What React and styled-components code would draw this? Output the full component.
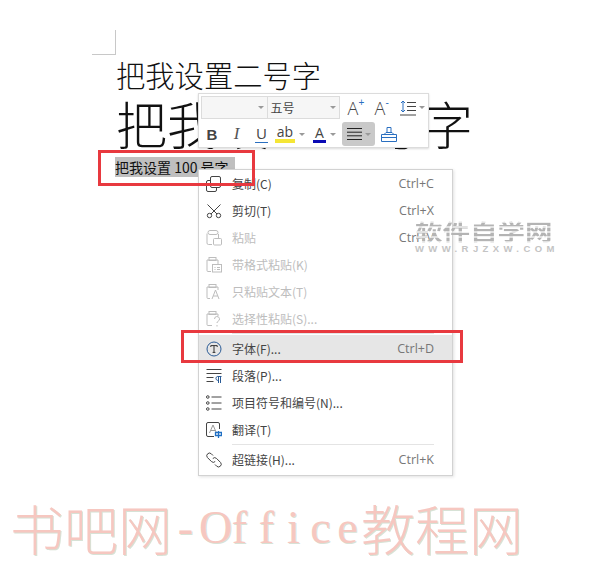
import React from 'react'
import styled, { createGlobalStyle } from 'styled-components'

const GlobalStyle = createGlobalStyle`
  html, body { margin: 0; padding: 0; background: #fff; }
  body { font-family: "Noto Sans CJK SC", "Liberation Sans", sans-serif; }
`

const menuItems = [
  { icon: 'copy', label: '复制(C)', key: 'Ctrl+C' },
  { icon: 'cut', label: '剪切(T)', key: 'Ctrl+X' },
  { icon: 'paste', label: '粘贴', key: 'Ctrl+V', off: true },
  { icon: 'pasteFormat', label: '带格式粘贴(K)', off: true },
  { icon: 'pasteText', label: '只粘贴文本(T)', off: true },
  { icon: 'pasteSpecial', label: '选择性粘贴(S)...', off: true, line: true },
  { icon: 'font', label: '字体(F)...', key: 'Ctrl+D', active: true },
  { icon: 'para', label: '段落(P)...' },
  { icon: 'list', label: '项目符号和编号(N)...' },
  { icon: 'translate', label: '翻译(T)', line: true },
  { icon: 'link', label: '超链接(H)...', key: 'Ctrl+K' },
]

const Ico = ({ children, w = 16, h = 16 }) => (
  <svg width={w} height={h} viewBox={`0 0 ${w} ${h}`} fill="none" stroke="currentColor" strokeWidth="1">
    {children}
  </svg>
)

const icons = {
  copy: (
    <Ico>
      <rect x="4.5" y="0.5" width="10" height="11" rx="1.5" />
      <path d="M4.5 4.5H2a1.5 1.5 0 0 0-1.5 1.5v8A1.5 1.5 0 0 0 2 15.5h7a1.5 1.5 0 0 0 1.500-1.500v-2.500" />
    </Ico>
  ),
  cut: (
    <Ico>
      <circle cx="3.5" cy="12.5" r="2.2" />
      <circle cx="12.5" cy="12.5" r="2.2" />
      <path d="M5 11L14.5 1.5M11 11L1.5 1.5" />
    </Ico>
  ),
  paste: (
    <Ico>
      <path d="M6 14.5H2.5a1.5 1.5 0 0 1-1.5-1.500V3.500" />
      <rect x="2" y="0.5" width="10" height="4" rx="2" />
      <path d="M12.500 4v4" />
      <rect x="7.500" y="8.500" width="8" height="6.500" rx="1" />
    </Ico>
  ),
  pasteFormat: (
    <Ico>
      <path d="M5 14.500H2a1 1 0 0 1-1-1V3h11v4" />
      <rect x="3" y="0.500" width="7" height="3" />
      <rect x="6.500" y="7.500" width="9" height="7.500" />
      <path d="M8.500 10.500h1M11 10.500h3M8.500 12.500h1M11 12.500h3" />
    </Ico>
  ),
  pasteText: (
    <Ico>
      <path d="M4 14.500H2a1 1 0 0 1-1-1V3h11v3" />
      <rect x="3" y="0.500" width="7" height="3" />
      <path d="M6 15l3.500-9L13 15M7.200 12h4.600" />
    </Ico>
  ),
  pasteSpecial: (
    <Ico>
      <path d="M6 14.500H2a1 1 0 0 1-1-1V3h11v2" />
      <rect x="3" y="0.500" width="7" height="3" />
      <path d="M8.500 8a2.500 2.500 0 1 1 3.500 2.300c-.7.4-1 .9-1 1.700M11 14v1.500" />
    </Ico>
  ),
  font: (
    <Ico>
      <circle cx="8" cy="8" r="7" stroke="#2a5b96" />
      <path d="M4.800 6V4.600h6.400V6M8 4.600v6.800M6.600 11.400h2.800" stroke="#333" />
    </Ico>
  ),
  para: (
    <Ico>
      <path d="M0.500 1.500h15M0.500 5.500h15M0.500 9.500h7M0.500 13.500h7" />
      <path d="M14.500 8.500v6.500M12.500 8.500v6.500M15.500 8.500h-4.200a2 2 0 0 0 0 3.800h1.200" stroke="#2a5b96" />
    </Ico>
  ),
  list: (
    <Ico>
      <circle cx="1.800" cy="2" r="1.300" />
      <circle cx="1.800" cy="8" r="1.300" />
      <circle cx="1.800" cy="14" r="1.300" />
      <path d="M5.500 2h10M5.500 8h10M5.500 14h10" />
    </Ico>
  ),
  translate: (
    <Ico>
      <path d="M8 14.500H2a1.500 1.500 0 0 1-1.500-1.500V2A1.500 1.500 0 0 1 2 .5h10A1.500 1.500 0 0 1 13.500 2v5" />
      <path d="M3.500 11l3.500-8 3.500 8M5 8.500h4" stroke="#999" />
      <path d="M9.500 10.500h6v3h-6zM12.500 9v7" stroke="#1f6fc4" strokeWidth="1.300" />
    </Ico>
  ),
  link: (
    <Ico>
      <path d="M7 3.500L5.200 1.700a2.700 2.700 0 0 0-3.800 3.800l4 4a2.700 2.700 0 0 0 3.800 0" />
      <path d="M9 12.500l1.800 1.800a2.700 2.700 0 0 0 3.800-3.800l-4-4a2.700 2.700 0 0 0-3.800 0" />
    </Ico>
  ),
}

function App() {
  return (
    <Page>
      <GlobalStyle />
      <CropMark />
      <Doc>
        <LineTwo>把我设置二号字</LineTwo>
        <LineOne>把我设置一号字</LineOne>
        <LineSmall><Picked>把我设置 100 号字</Picked></LineSmall>
      </Doc>

      <Toolbar>
        <ToolRow>
          <Combo $w={67}><Caret /></Combo>
          <Combo $w={74}>五号<Caret /></Combo>
          <ToolBtn $w={24} $ml={5}>
            <SizeMark>A<SizeSign>+</SizeSign></SizeMark>
          </ToolBtn>
          <ToolBtn $w={24} $ml={3}>
            <SizeMark>A<SizeSign>-</SizeSign></SizeMark>
          </ToolBtn>
          <ToolBtn $w={32} $ml={1}>
            <svg width="16" height="16" viewBox="0 0 16 16" fill="none" stroke="#444">
              <path d="M7 2.500h9M7 6.500h9M7 10.500h9M0 15h16" />
              <path d="M3 1v11M1 3l2-2 2 2M1 10l2 2 2-2" stroke="#2a6fc0" />
            </svg>
            <Caret $ml={3} />
          </ToolBtn>
        </ToolRow>
        <ToolRow $mt={2}>
          <ToolBtn $w={22} $ml={0}><BoldMark>B</BoldMark></ToolBtn>
          <ToolBtn $w={27} $ml={0}><ItalicMark>I</ItalicMark></ToolBtn>
          <ToolBtn $w={23} $ml={0}><UnderMark>U</UnderMark></ToolBtn>
          <ToolBtn $w={34} $ml={0}>
            <BarMark $bar="#f5e636" $h={4}>ab</BarMark>
            <Caret $ml={4} />
          </ToolBtn>
          <ToolBtn $w={35} $ml={0}>
            <BarMark $bar="#0a0ab4" $h={3}>A</BarMark>
            <Caret $ml={4} />
          </ToolBtn>
          <ToolBtn $w={33} $h={24} $on $ml={0}>
            <svg width="15" height="12" viewBox="0 0 15 12" fill="none" stroke="#222">
              <path d="M0 .500h15M0 4.200h15M0 7.800h15M0 11.500h15" />
            </svg>
            <Caret $ml={3} />
          </ToolBtn>
          <ToolBtn $w={21} $ml={3}>
            <svg width="16" height="16" viewBox="0 0 16 16" fill="none" stroke="#2a6fc0">
              <path d="M.500 8.500h15v7H.500zM.500 11.500h15M3 8.500l2-2h6l2 2M6 6.500V1.500h4v5" />
            </svg>
          </ToolBtn>
        </ToolRow>
      </Toolbar>

      <Menu>
        {menuItems.map((item) => (
          <React.Fragment key={item.label}>
            <MenuRow $active={item.active} $off={item.off}>
              <MenuIcon>{icons[item.icon]}</MenuIcon>
              <MenuLabel>{item.label}</MenuLabel>
              {item.key && <Shortcut>{item.key}</Shortcut>}
            </MenuRow>
            {item.line && <MenuLine />}
          </React.Fragment>
        ))}
      </Menu>

      <RedBoxFirst />
      <RedBoxSecond />

      <SiteMark>
        <SiteName>软件自学网</SiteName>
        <SiteUrl>WWW.RJZXW.COM</SiteUrl>
      </SiteMark>

      <FootMark>
        书吧网
        {'-Office'.split('').map((c, i) => <FootLatin key={i}>{c}</FootLatin>)}
        教程网
      </FootMark>
    </Page>
  )
}

const Page = styled.div`
  position: relative;
  width: 615px;
  height: 568px;
  overflow: hidden;
  background: #fff;
`

const CropMark = styled.div`
  position: absolute;
  left: 92px;
  top: 30px;
  width: 23px;
  height: 24px;
  border-right: 1px solid #c8c8c8;
  border-bottom: 1px solid #c8c8c8;
`

const Doc = styled.div`
  display: flex;
  flex-direction: column;
  padding: 56px 0 0 116px;
  color: #111;
`

const LineTwo = styled.div`
  font-size: 29.3px;
  line-height: 36px;
  font-weight: 300;
  white-space: nowrap;
`

const LineOne = styled.div`
  font-size: 51px;
  line-height: 62px;
  font-weight: 300;
  white-space: nowrap;
  height: 62px;
`

const LineSmall = styled.div`
  font-size: 14px;
  line-height: 20px;
  margin-left: -1px;
  margin-top: 3px;
  white-space: nowrap;
`

const Picked = styled.span`
  display: inline-block;
  width: 120px;
  height: 20px;
  background: #bfbfbf;
`

const Toolbar = styled.div`
  position: absolute;
  left: 198px;
  top: 93px;
  width: 231px;
  height: 55px;
  box-sizing: border-box;
  background: #fff;
  border: 1px solid #dcdcdc;
  box-shadow: 0 1px 2px rgba(0, 0, 0, 0.15);
  padding: 2px 0 0 2px;
`

const ToolRow = styled.div`
  display: flex;
  align-items: center;
  height: ${(p) => (p.$mt ? 26 : 23)}px;
  margin-top: ${(p) => p.$mt || 0}px;
`

const Combo = styled.div`
  display: flex;
  align-items: center;
  justify-content: space-between;
  box-sizing: border-box;
  width: ${(p) => p.$w}px;
  height: 23px;
  padding: 0 3px;
  margin-right: -1px;
  background: #f6f6f6;
  border: 1px solid #dcdcdc;
  font-size: 12px;
  color: #444;

  &:first-child {
    justify-content: flex-end;
  }
`

const Caret = styled.span`
  display: inline-block;
  flex: none;
  width: 0;
  height: 0;
  margin-left: ${(p) => p.$ml || 0}px;
  border-left: 3px solid transparent;
  border-right: 3px solid transparent;
  border-top: 3px solid #999;
`

const ToolBtn = styled.div`
  display: flex;
  align-items: center;
  justify-content: center;
  box-sizing: border-box;
  flex: none;
  width: ${(p) => p.$w}px;
  height: ${(p) => p.$h || 23}px;
  margin-left: ${(p) => p.$ml || 0}px;
  border-radius: 3px;
  background: ${(p) => (p.$on ? '#c9c9c9' : 'transparent')};
`

const SizeMark = styled.span`
  position: relative;
  margin-left: -6px;
  font: 300 18px/20px "Open Sans", "Liberation Sans", sans-serif;
  color: #444;
`

const SizeSign = styled.span`
  position: absolute;
  left: 11px;
  top: -1px;
  font: 10px/12px "Liberation Sans", sans-serif;
  color: #2a6fc0;
`

const BoldMark = styled.span`
  font: bold 15px "Liberation Sans", sans-serif;
  color: #444;
`

const ItalicMark = styled.span`
  font: italic 17px "Liberation Serif", serif;
  color: #555;
`

const UnderMark = styled.span`
  font: 15px/15px "Open Sans", "Liberation Sans", sans-serif;
  color: #444;
  border-bottom: 1px solid #2a6fc0;
  padding: 0 1px 1px;
`

const BarMark = styled.span`
  font: 14px/13px "Open Sans", "Liberation Sans", sans-serif;
  color: #444;
  border-bottom: ${(p) => p.$h}px solid ${(p) => p.$bar};
  padding: 0 2px 1px;
`

const Menu = styled.div`
  position: absolute;
  left: 198px;
  top: 169px;
  width: 255px;
  height: 307px;
  box-sizing: border-box;
  background: #fff;
  border: 1px solid #d2d2d2;
  box-shadow: 1px 1px 3px rgba(0, 0, 0, 0.12);
`

const MenuRow = styled.div`
  display: flex;
  align-items: center;
  height: 27px;
  padding: 0 18px 0 7px;
  background: ${(p) => (p.$active ? '#e6e6e6' : 'transparent')};
  color: ${(p) => (p.$off ? '#bdbdbd' : '#444')};
`

const MenuIcon = styled.span`
  display: flex;
  width: 16px;
  height: 16px;
  margin-right: 10px;
`

const MenuLabel = styled.span`
  flex: 1;
  font-size: 12px;
  white-space: nowrap;
`

const Shortcut = styled.span`
  font: 12.500px "Open Sans", "Liberation Sans", sans-serif;
  color: #777;
`

const MenuLine = styled.div`
  height: 1px;
  margin: 1px 18px 1px 33px;
  background: #e4e4e4;
`

const RedBoxFirst = styled.div`
  position: absolute;
  left: 98px;
  top: 150px;
  width: 157px;
  height: 36px;
  box-sizing: border-box;
  border: 3px solid #e8393f;
`

const RedBoxSecond = styled.div`
  position: absolute;
  left: 181px;
  top: 330px;
  width: 282px;
  height: 33px;
  box-sizing: border-box;
  border: 3px solid #e8393f;
`

const SiteMark = styled.div`
  position: absolute;
  left: 415px;
  top: 218px;
  width: 140px;
`

const SiteName = styled.div`
  width: 110px;
  font-size: 22px;
  line-height: 25px;
  font-weight: 700;
  white-space: nowrap;
  color: transparent;
  background: repeating-linear-gradient(180deg, #b4b4b4 0 3px, #e2e2e2 3px 5px);
  -webkit-background-clip: text;
  background-clip: text;
  transform: scaleX(1.25);
  transform-origin: left top;
`

const SiteUrl = styled.div`
  margin-top: 1px;
  font: bold 9.500px/10px "Liberation Sans", sans-serif;
  letter-spacing: 4.400px;
  white-space: nowrap;
  color: #c4c4c4;
`

const FootMark = styled.div`
  position: absolute;
  left: 10px;
  top: 494px;
  display: flex;
  align-items: center;
  font-size: 54px;
  line-height: 68px;
  white-space: nowrap;
  font-weight: 300;
  color: #f6c7c0;
  text-shadow: 1px 1px 0 #d7e2d6;
`

const FootLatin = styled.span`
  display: inline-block;
  width: 27px;
  text-align: center;
  font-family: "Liberation Serif", serif;
  font-size: 46px;
`

export default App
